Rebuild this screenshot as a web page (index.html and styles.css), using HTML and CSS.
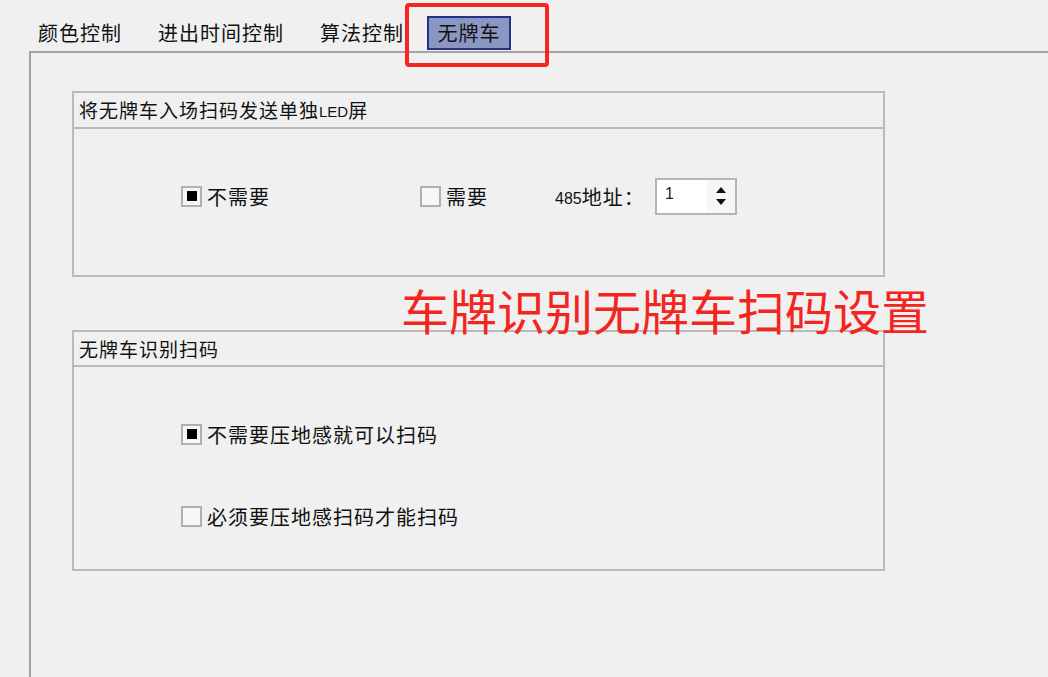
FILE: index.html
```html
<!DOCTYPE html>
<html lang="zh-CN">
<head>
<meta charset="utf-8">
<title>无牌车</title>
<link rel="stylesheet" href="styles.css">
</head>
<body>
<div class="window">
  <div class="tabs">
    <div class="tab t1">颜色控制</div>
    <div class="tab t2">进出时间控制</div>
    <div class="tab t3">算法控制</div>
    <div class="tab active">无牌车</div>
  </div>
  <div class="highlight"></div>
  <div class="panel">
    <div class="group g1">
      <div class="group-head">将无牌车入场扫码发送单独<span class="latin">LED</span>屏</div>
      <div class="group-body">
        <div class="row">
          <label class="check w1"><span class="box checked"></span>不需要</label>
          <label class="check w2"><span class="box"></span>需要</label>
          <span class="addr"><span class="num">485</span>地址：</span>
          <div class="spin">
            <span class="spin-val">1</span>
            <span class="spin-btns">
              <svg width="12" height="8" viewBox="0 0 12 8"><path d="M6 1 L11 7 L1 7 Z" fill="#111"/></svg>
              <svg width="12" height="8" viewBox="0 0 12 8"><path d="M1 1 L11 1 L6 7 Z" fill="#111"/></svg>
            </span>
          </div>
        </div>
      </div>
    </div>
    <div class="group g2">
      <div class="group-head">无牌车识别扫码</div>
      <div class="group-body col">
        <label class="check"><span class="box checked"></span>不需要压地感就可以扫码</label>
        <label class="check"><span class="box"></span>必须要压地感扫码才能扫码</label>
      </div>
    </div>
  </div>
  <div class="note">车牌识别无牌车扫码设置</div>
</div>
</body>
</html>
```
FILE: styles.css
```css
html, body {
  margin: 0;
  padding: 0;
  background: #f0f0f0;
}
body {
  font-family: "Noto Sans CJK SC", "Noto Sans", sans-serif;
  color: #111;
  font-size: 20px;
}
.window {
  position: relative;
  width: 1048px;
  height: 677px;
  overflow: hidden;
}
.tabs {
  display: flex;
  align-items: center;
  height: 36px;
  padding-top: 15px;
  padding-left: 38px;
}
.tab {
  height: 34px;
  line-height: 34px;
  letter-spacing: 1px;
  white-space: nowrap;
}
.t1 { width: 120px; }
.t2 { width: 162px; }
.t3 { width: 107px; }
.active {
  box-sizing: border-box;
  width: 84px;
  background: #8a97c2;
  border: 2px solid #25308c;
  text-align: center;
  line-height: 30px;
}
.highlight {
  position: absolute;
  left: 405px;
  top: 3px;
  width: 136px;
  height: 56px;
  border: 4px solid #f52620;
  border-radius: 4px;
}
.panel {
  margin-left: 29px;
  height: 626px;
  border-top: 2px solid #a3a3a3;
  border-left: 2px solid #a3a3a3;
  padding-top: 38px;
  box-sizing: border-box;
}
.group {
  margin-left: 41px;
  width: 813px;
  box-sizing: border-box;
  border: 2px solid #bababa;
}
.g2 { margin-top: 53px; }
.group-head {
  height: 34px;
  line-height: 34px;
  padding-left: 5px;
  border-bottom: 2px solid #bababa;
  font-size: 19px;
  letter-spacing: 1px;
}
.g2 .group-head { height: 33px; line-height: 33px; }
.latin {
  font-family: "Liberation Sans", sans-serif;
  font-size: 15px;
  letter-spacing: 0;
  position: relative;
  top: -1px;
}
.g1 .group-body {
  height: 146px;
  padding-top: 49px;
  box-sizing: border-box;
  padding-left: 107px;
}
.g2 .group-body {
  height: 202px;
  padding-top: 49px;
  padding-left: 107px;
  box-sizing: border-box;
  display: flex;
  flex-direction: column;
  gap: 46px;
}
.row {
  display: flex;
  align-items: center;
  height: 36px;
}
.check {
  display: flex;
  align-items: center;
  height: 36px;
  letter-spacing: 1px;
  white-space: nowrap;
}
.w1 { width: 239px; }
.w2 { width: 135px; }
.box {
  box-sizing: border-box;
  width: 21px;
  height: 21px;
  border: 2px solid #b0b0b0;
  background: #f7f7f7;
  margin-right: 5px;
  display: flex;
  align-items: center;
  justify-content: center;
}
.box.checked::after {
  content: "";
  width: 10px;
  height: 10px;
  background: #000;
}
.addr {
  width: 100px;
  white-space: nowrap;
  letter-spacing: 1px;
}
.num {
  font-family: "Liberation Sans", sans-serif;
  font-size: 16px;
  letter-spacing: 0;
  position: relative;
  top: -1px;
}
.spin {
  box-sizing: border-box;
  width: 82px;
  height: 37px;
  border: 2px solid #b5b5b5;
  background: #fff;
  display: flex;
  align-items: stretch;
}
.spin-val {
  flex: 1;
  font-family: "Liberation Sans", sans-serif;
  font-size: 16px;
  color: #222;
  padding-left: 8px;
  line-height: 28px;
}
.spin-btns {
  width: 28px;
  background: #f6f6f6;
  display: flex;
  flex-direction: column;
  align-items: center;
  justify-content: center;
  gap: 4px;
}
.spin-btns svg { display: block; }
.note {
  position: absolute;
  left: 401px;
  top: 285px;
  font-size: 48px;
  line-height: 48px;
  color: #f2261f;
  white-space: nowrap;
}
```
